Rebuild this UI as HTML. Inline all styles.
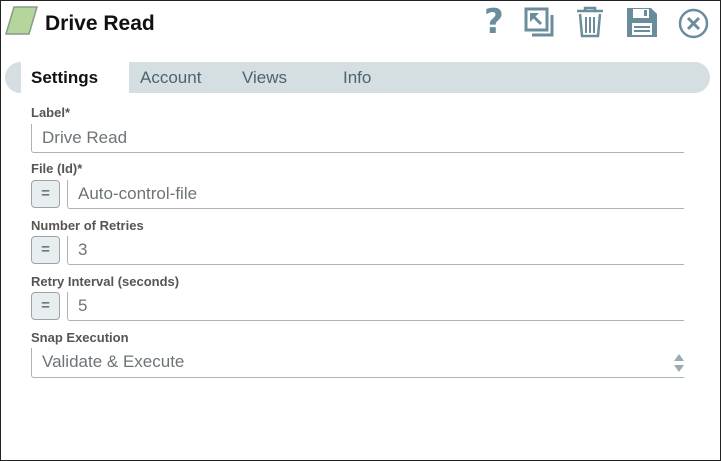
<!DOCTYPE html>
<html><head><style>
*{box-sizing:border-box;margin:0;padding:0}
body{width:721px;height:461px;overflow:hidden;background:#fff;font-family:"Liberation Sans",sans-serif;position:relative}
.frame{position:absolute;left:0;top:0;width:721px;height:461px;border:1px solid #222}
.abs{position:absolute}
.title{left:45px;top:12px;font-size:21px;font-weight:bold;color:#111}
.tabs{left:5px;top:62px;width:705px;height:31px;background:#d5dee1;border-radius:16px}
.tab{position:absolute;top:0;height:31px;line-height:32px;font-size:17px;color:#4c6470}
.lbl{left:31px;font-size:13px;font-weight:bold;color:#555}
.inp{border-left:1px solid #a9b4b9;border-bottom:1px solid #a9b4b9;border-radius:0 0 0 3px;font-size:17px;color:#6d7478;padding-left:10px;line-height:28px}
.btn{left:31px;width:29px;height:28px;border:1px solid #9aa5aa;border-radius:4px;background:#e8eef0;color:#6a7a82;text-align:center;line-height:25px;font-size:15px;font-weight:bold}
</style></head><body>
<div class="frame"></div>
<svg class="abs" style="left:3px;top:6px" width="36" height="30"><polygon points="11,1 34,1 26,28 3,28" fill="#b5d69b" stroke="#8a9a8a" stroke-width="1.5"/></svg>
<div class="abs title">Drive Read</div>
<div class="abs" style="left:484px;top:2px;font-size:34px;font-weight:bold;color:#6a8d9c;font-family:'DejaVu Sans',sans-serif">?</div>
<svg class="abs" style="left:524px;top:7px" width="32" height="32" fill="none" stroke="#6a8d9c" stroke-width="3"><rect x="2" y="2" width="21" height="21"/><path d="M8 28 H28 V8" /><path d="M7 7 L17 17" stroke-width="3"/><polygon points="6,6 15,6 6,15" fill="#6a8d9c" stroke="none"/></svg>
<svg class="abs" style="left:575px;top:6px" width="30" height="32" fill="none" stroke="#6a8d9c" stroke-width="2.5"><path d="M2 5 H28 M10 5 V2 H20 V5"/><path d="M5 8 L7 30 H23 L25 8"/><path d="M11 11 V27 M15 11 V27 M19 11 V27" stroke-width="2"/></svg>
<svg class="abs" style="left:626px;top:7px" width="32" height="31"><path d="M1 1 H25 L31 7 V30 H1 Z" fill="#6a8d9c"/><rect x="7" y="2" width="16" height="9" fill="#fff"/><rect x="18" y="3" width="3" height="6" fill="#6a8d9c"/><rect x="6" y="16" width="20" height="12" fill="#fff"/><path d="M8 20 H24 M8 24 H24" stroke="#6a8d9c" stroke-width="2"/></svg>
<svg class="abs" style="left:678px;top:8px" width="31" height="31" fill="none" stroke="#6a8d9c" stroke-width="2.5"><circle cx="15.5" cy="15.5" r="13.5"/><path d="M10 10 L21 21 M21 10 L10 21" stroke-width="3"/></svg>
<div class="abs tabs">
<div class="tab" style="left:16px;width:108px;background:#fff;color:#111;font-weight:bold;padding-left:10px">Settings</div>
<div class="tab" style="left:135px">Account</div>
<div class="tab" style="left:237px">Views</div>
<div class="tab" style="left:338px">Info</div>
</div>
<div class="abs lbl" style="top:105px">Label*</div>
<div class="abs inp" style="left:31px;top:124px;width:653px;height:29px">Drive Read</div>
<div class="abs lbl" style="top:161px">File (Id)*</div>
<div class="abs btn" style="top:180px">=</div>
<div class="abs inp" style="left:67px;top:180px;width:617px;height:29px">Auto-control-file</div>
<div class="abs lbl" style="top:218px">Number of Retries</div>
<div class="abs btn" style="top:236px">=</div>
<div class="abs inp" style="left:67px;top:236px;width:617px;height:29px">3</div>
<div class="abs lbl" style="top:274px">Retry Interval (seconds)</div>
<div class="abs btn" style="top:292px">=</div>
<div class="abs inp" style="left:67px;top:292px;width:617px;height:29px">5</div>
<div class="abs lbl" style="top:330px">Snap Execution</div>
<div class="abs inp" style="left:31px;top:348px;width:653px;height:30px">Validate &amp; Execute</div>
<svg class="abs" style="left:673px;top:353px" width="12" height="20" fill="#9aabb2"><polygon points="6,1 11,8 1,8"/><polygon points="1,12 11,12 6,19"/></svg>
</body></html>
